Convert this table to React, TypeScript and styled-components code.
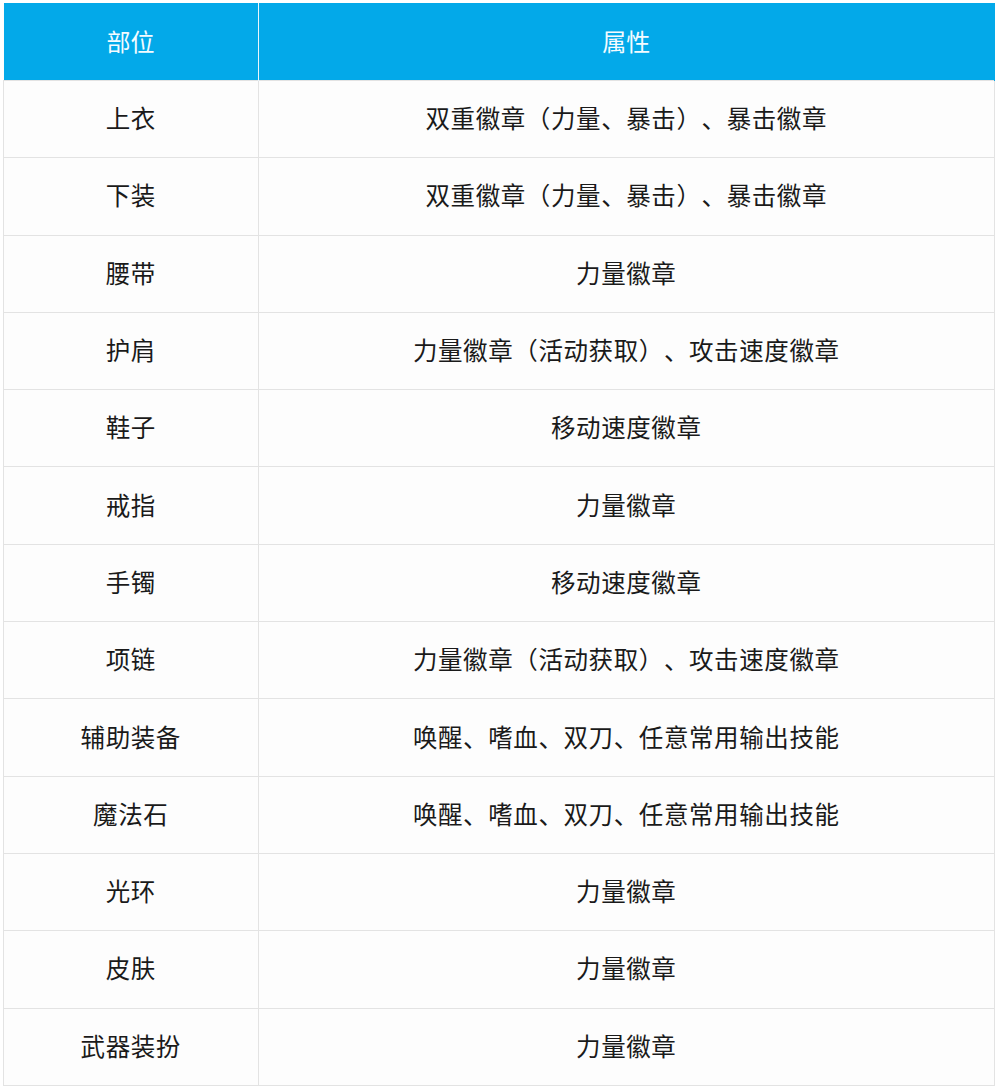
import React from 'react';
import styled, { createGlobalStyle } from 'styled-components';

const GlobalStyle = createGlobalStyle`
  html, body {
    margin: 0;
    padding: 0;
    background: #ffffff;
  }
  body {
    font-family: "Noto Sans CJK SC", "Noto Sans", sans-serif;
    text-spacing-trim: space-all;
  }
`;

const Page = styled.div`
  padding: 3px 3px 0 3px;
  width: 998px;
  box-sizing: border-box;
`;

const Table = styled.table`
  width: 992px;
  border-collapse: collapse;
  table-layout: fixed;
  background: #fdfdfd;
`;

const HeadCell = styled.th<{ $wide?: boolean }>`
  width: ${(p) => (p.$wide ? 'auto' : '254px')};
  height: 75px;
  background: #03a9e9;
  color: #f4fbff;
  font-size: 24px;
  font-weight: 400;
  text-align: center;
  padding: 0 0 2px 0;
  border-right: 1px solid ${(p) => (p.$wide ? '#03a9e9' : '#e8f6fd')};
`;

const Row = styled.tr`
  height: 77.3px;
`;

const Cell = styled.td`
  border: 1px solid #e3e3e3;
  color: #1a1a1a;
  font-size: 24.5px;
  text-align: center;
  padding: 0 0 3px 0;
  letter-spacing: 0.6px;
  text-spacing-trim: space-all;
  font-feature-settings: "halt" 0, "chws" 0;
`;

const rows: [string, string][] = [
  ['上衣', '双重徽章（力量、暴击）、暴击徽章'],
  ['下装', '双重徽章（力量、暴击）、暴击徽章'],
  ['腰带', '力量徽章'],
  ['护肩', '力量徽章（活动获取）、攻击速度徽章'],
  ['鞋子', '移动速度徽章'],
  ['戒指', '力量徽章'],
  ['手镯', '移动速度徽章'],
  ['项链', '力量徽章（活动获取）、攻击速度徽章'],
  ['辅助装备', '唤醒、嗜血、双刀、任意常用输出技能'],
  ['魔法石', '唤醒、嗜血、双刀、任意常用输出技能'],
  ['光环', '力量徽章'],
  ['皮肤', '力量徽章'],
  ['武器装扮', '力量徽章'],
];

const App: React.FC = () => {
  return (
    <Page>
      <GlobalStyle />
      <Table>
        <thead>
          <tr>
            <HeadCell>部位</HeadCell>
            <HeadCell $wide>属性</HeadCell>
          </tr>
        </thead>
        <tbody>
          {rows.map(([part, attr], index) => (
            <Row key={index}>
              <Cell>{part}</Cell>
              <Cell>{attr}</Cell>
            </Row>
          ))}
        </tbody>
      </Table>
    </Page>
  );
};

export default App;
